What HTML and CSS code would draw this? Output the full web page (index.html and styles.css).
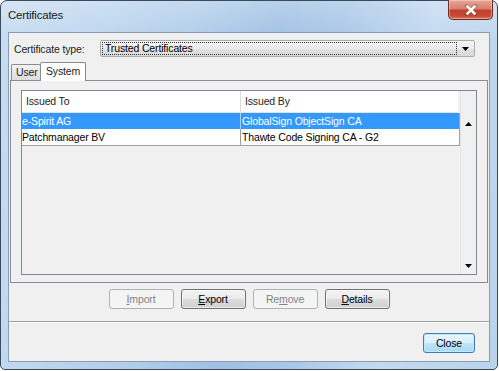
FILE: index.html
```html
<!DOCTYPE html>
<html lang="en">
<head>
  <meta charset="UTF-8" />
  <title>Certificates</title>
  <link rel="stylesheet" href="styles.css">
</head>
<body>

  <div class="window">
    <div class="titlebar">
      <span class="title">Certificates</span>
      <button class="close-x" type="button" aria-label="Close">
        <svg width="14" height="12" viewBox="0 0 14 12">
          <path d="M3 2 L11 10 M11 2 L3 10" stroke="#5a1d14" stroke-width="3.8" stroke-linecap="square" fill="none" opacity="0.35"/>
          <path d="M3.5 2.5 L10.5 9.5 M10.5 2.5 L3.5 9.5" stroke="#fff" stroke-width="2.6" stroke-linecap="square" fill="none"/>
        </svg>
      </button>
    </div>

    <div class="client">
      <div class="type-row">
        <label class="type-label">Certificate type:</label>
        <div class="combo">
          <div class="combo-value">Trusted Certificates</div>
          <div class="combo-arrow">
            <svg width="7" height="4" viewBox="0 0 7 4"><path d="M0 0 H7 L3.5 4 Z" fill="#000"/></svg>
          </div>
        </div>
      </div>

      <div class="tabs">
        <div class="tab tab-user">User</div>
        <div class="tab tab-system active">System</div>
      </div>

      <div class="panel">
        <div class="table-box">
          <div class="table-main">
            <div class="thead">
              <div class="th col-to">Issued To</div>
              <div class="th col-by">Issued By</div>
            </div>
            <div class="rows">
              <div class="row selected">
                <div class="cell col-to">e-Spirit AG</div>
                <div class="cell col-by">GlobalSign ObjectSign CA</div>
              </div>
              <div class="row">
                <div class="cell col-to">Patchmanager BV</div>
                <div class="cell col-by">Thawte Code Signing CA - G2</div>
              </div>
            </div>
          </div>
          <div class="scrollbar">
            <div class="scroll-btn">
              <svg width="7" height="4" viewBox="0 0 7 4"><path d="M0 4 H7 L3.5 0 Z" fill="#000"/></svg>
            </div>
            <div class="scroll-track"></div>
            <div class="scroll-btn">
              <svg width="7" height="4" viewBox="0 0 7 4"><path d="M0 0 H7 L3.5 4 Z" fill="#000"/></svg>
            </div>
          </div>
        </div>
      </div>

      <div class="actions">
        <button class="btn" type="button" disabled><u>I</u>mport</button>
        <button class="btn" type="button"><u>E</u>xport</button>
        <button class="btn" type="button" disabled>Re<u>m</u>ove</button>
        <button class="btn" type="button"><u>D</u>etails</button>
      </div>

      <div class="separator"></div>

      <div class="footer">
        <button class="btn btn-default" type="button">Close</button>
      </div>
    </div>
  </div>

</body>
</html>
```

FILE: styles.css
```css
* {
  margin: 0;
  padding: 0;
  box-sizing: border-box;
}

html, body {
  width: 499px;
  height: 371px;
  overflow: hidden;
  background: #fff;
}

body {
  font-family: "Liberation Sans", Arial, sans-serif;
  font-size: 10.5px;
  letter-spacing: -0.15px;
  color: #000;
}

.window {
  width: 498px;
  height: 370px;
  border: 1px solid #3b4a5c;
  border-radius: 7px 7px 5px 5px;
  padding: 0 7px 7px 7px;
  display: flex;
  flex-direction: column;
  background:
    linear-gradient(to bottom, rgba(255, 255, 255, 0.25), rgba(255, 255, 255, 0) 40px),
    linear-gradient(100deg, #c8dcf1 0%, #bcd5ee 20%, #b0cdea 35%, #a0c1e4 50%, #a8c6e7 62%, #c3d9f0 78%, #bad3ec 100%);
}

.titlebar {
  height: 31px;
  display: flex;
  align-items: flex-start;
}

.title {
  padding-top: 7px;
  font-size: 11.5px;
  line-height: 14px;
  letter-spacing: -0.2px;
  color: #1b1b1b;
}

.close-x {
  margin-left: auto;
  margin-right: -3px;
  margin-top: -1px;
  width: 45px;
  height: 20px;
  border: 1px solid #6b2a22;
  border-top: none;
  border-radius: 0 0 5px 5px;
  background: linear-gradient(to bottom, #e8a597 0%, #d7806f 45%, #c0412e 55%, #c74b36 85%, #dd7b60 100%);
  box-shadow: inset 0 0 0 1px rgba(255, 255, 255, 0.35);
  display: flex;
  align-items: center;
  justify-content: center;
}

.client {
  flex: 1;
  background: #f0f0f0;
  border: 1px solid #8a9cb1;
  display: flex;
  flex-direction: column;
}

/* certificate type */

.type-row {
  display: flex;
  align-items: center;
  margin: 7px 14px 0 5px;
  height: 17px;
}

.type-label {
  width: 86px;
  flex-shrink: 0;
  color: #1e1e1e;
}

.combo {
  flex: 1;
  height: 17px;
  border: 1px solid #acacac;
  border-radius: 2px;
  background: linear-gradient(to bottom, #f4f4f4 0%, #ececec 50%, #e2e2e2 50%, #d9d9d9 100%);
  display: flex;
  align-items: center;
  padding: 1px 0 1px 1px;
}

.combo-value {
  flex: 1;
  height: 13px;
  line-height: 11px;
  border: 1px dotted #333;
  padding-left: 2px;
}

.combo-arrow {
  width: 17px;
  display: flex;
  justify-content: center;
  align-items: center;
}

/* tabs */

.tabs {
  display: flex;
  align-items: flex-end;
  height: 18px;
  margin: 5px 0 0 2px;
}

.tab {
  height: 16px;
  line-height: 15px;
  padding-left: 4px;
  border: 1px solid #898c95;
  border-bottom: none;
  border-radius: 2px 2px 0 0;
  background: linear-gradient(to bottom, #f2f2f2, #dcdcdc);
  color: #1e1e1e;
}

.tab-user {
  width: 30px;
}

.tab-system {
  width: 46px;
}

.tab.active {
  height: 19px;
  line-height: 17px;
  margin-left: -1px;
  margin-bottom: -1px;
  padding-left: 5px;
  background: #fff;
  position: relative;
  z-index: 1;
}

.panel {
  margin: 0 1px;
  height: 203px;
  border: 1px solid #898c95;
  padding: 9px 10px 6px 10px;
}

/* certificate table */

.table-box {
  height: 185px;
  border: 1px solid #828790;
  display: flex;
  background: #f0f0f0;
}

.table-main {
  flex: 1;
}

.thead {
  display: flex;
  height: 22px;
  background: #fff;
  border-bottom: 1px solid #e3e3e3;
  margin-right: 2px;
}

.th {
  line-height: 21px;
  padding-left: 4px;
  color: #1e1e1e;
}

.col-to {
  width: 219px;
  flex-shrink: 0;
  border-right: 1px solid #dcdcdc;
}

.col-by {
  flex: 1;
}

.rows {
  border-right: 1px solid #a0a0a0;
  border-bottom: 1px solid #a0a0a0;
  background: #fff;
}

.row {
  display: flex;
  height: 16px;
}

.cell {
  line-height: 16px;
  padding-left: 1px;
}

.cell.col-to {
  padding-left: 0;
  border-right: 1px solid #a0a0a0;
}

.row.selected {
  background: #3399ff;
  color: #fff;
}

.row.selected .cell.col-to {
  border-right-color: #a9cff5;
}

.scrollbar {
  width: 16px;
  display: flex;
  flex-direction: column;
  padding-top: 24px;
  border-left: 1px solid #e6e6e6;
}

.scroll-btn {
  height: 17px;
  display: flex;
  align-items: center;
  justify-content: center;
}

.scroll-track {
  flex: 1;
}

/* buttons */

.actions {
  display: flex;
  justify-content: center;
  gap: 7px;
  margin-top: 6px;
}

.btn {
  width: 65px;
  height: 20px;
  font-family: "Liberation Sans", Arial, sans-serif;
  font-size: 10.5px;
  letter-spacing: -0.15px;
  color: #000;
  border: 1px solid #707070;
  border-radius: 3px;
  background: linear-gradient(to bottom, #f2f2f2 0%, #ebebeb 50%, #dddddd 50%, #cfcfcf 100%);
  box-shadow: inset 0 0 0 1px rgba(255, 255, 255, 0.6);
}

.btn:disabled {
  border-color: #adb2b5;
  background: #f4f4f4;
  color: #838383;
  box-shadow: none;
}

.separator {
  margin-top: 12px;
  border-top: 1px solid #a0a0a0;
  border-bottom: 1px solid #fff;
}

.footer {
  display: flex;
  justify-content: flex-end;
  margin: 10px 14px 0 0;
}

.btn-default {
  width: 52px;
  border-color: #3c7fb1;
  background: linear-gradient(to bottom, #eaf6fd 0%, #d9f0fc 50%, #bee6fd 50%, #a7d9f5 100%);
  box-shadow: inset 0 0 0 1px #c8e7f7;
}
```
